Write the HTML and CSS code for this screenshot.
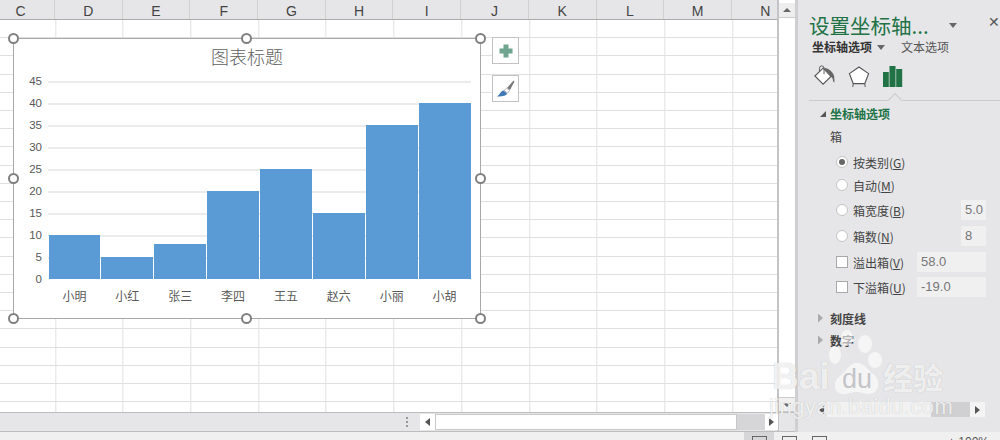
FILE: index.html
```html
<!DOCTYPE html>
<html lang="zh">
<head>
<meta charset="utf-8">
<title>设置坐标轴选项</title>
<link rel="stylesheet" href="styles.css">
</head>
<body>
<div class="app">
  <div class="main">
    <div class="sheet-col">
      <div class="col-head">
        <div class="col first">C</div><div class="col">D</div><div class="col">E</div><div class="col">F</div><div class="col">G</div><div class="col">H</div><div class="col">I</div><div class="col">J</div><div class="col">K</div><div class="col">L</div><div class="col">M</div><div class="col">N</div>
      </div>
      <div class="grid">
        <div class="chart">
          <div class="chart-title">图表标题</div>
          <div class="chart-body">
            <div class="y-axis"><span>45</span><span>40</span><span>35</span><span>30</span><span>25</span><span>20</span><span>15</span><span>10</span><span>5</span><span>0</span></div>
            <div class="plot">
              <div class="bar" style="height:22.22%"></div>
              <div class="bar" style="height:11.11%"></div>
              <div class="bar" style="height:17.78%"></div>
              <div class="bar" style="height:44.44%"></div>
              <div class="bar" style="height:55.56%"></div>
              <div class="bar" style="height:33.33%"></div>
              <div class="bar" style="height:77.78%"></div>
              <div class="bar" style="height:88.89%"></div>
            </div>
          </div>
          <div class="x-axis"><span>小明</span><span>小红</span><span>张三</span><span>李四</span><span>王五</span><span>赵六</span><span>小丽</span><span>小胡</span></div>
          <i class="handle h-tl"></i><i class="handle h-tc"></i><i class="handle h-tr"></i>
          <i class="handle h-ml"></i><i class="handle h-mr"></i>
          <i class="handle h-bl"></i><i class="handle h-bc"></i><i class="handle h-br"></i>
        </div>
        <div class="chart-tools">
          <div class="tool">
            <svg width="16" height="16" viewBox="0 0 16 16"><path d="M5.500 1.500h5v4h4v5h-4v4h-5v-4h-4v-5h4z" fill="#6fa58f"/></svg>
          </div>
          <div class="tool">
            <svg width="20" height="20" viewBox="0 0 20 20"><path d="M11 9 L17.500 1.500 L18.500 2.500 L14 11z" fill="#7a7a7a"/><path d="M10.500 9 L13.500 11.500 L11.500 14 L8 11.500z" fill="#fff" stroke="#888" stroke-width=".6"/><path d="M7.500 11.500 L11 14.500 C10.500 16.500 8 17.500 1 17.500 C3.500 16 4 14 5 13 C5.800 12.200 6.500 11.800 7.500 11.500z" fill="#3f78b5"/></svg>
          </div>
        </div>
      </div>
      <div class="hscroll">
        <span class="dots"></span>
        <div class="sb-btn"><i class="tri-left"></i></div>
        <div class="hthumb"></div>
        <div class="htrack"></div>
        <div class="sb-btn narrow"><i class="tri-right"></i></div>
      </div>
    </div>
    <div class="vscroll">
      <div class="v-btn"><i class="tri-up"></i></div>
      <div class="v-track"></div>
      <div class="v-btn down"><i class="tri-down"></i></div>
      <div class="v-corner"></div>
    </div>
    <aside class="panel">
      <div class="panel-title">
        <h1>设置坐标轴...</h1>
        <i class="caret title-caret"></i>
        <span class="close">✕</span>
      </div>
      <div class="panel-tabs">
        <b>坐标轴选项</b><i class="caret"></i><span>文本选项</span>
      </div>
      <div class="panel-icons">
        <svg class="ic-bucket" width="23" height="22" viewBox="0 0 24 24"><path d="M1.500 12 L10.500 3.500 L19 12.500 L10.500 21z" fill="#fff" stroke="#555" stroke-width="1.200"/><path d="M6.500 7.500 V3.500 A2.500 2.500 0 0 1 11.500 3.500 V10" fill="none" stroke="#555" stroke-width="1"/><path d="M11 3 C16 3.500 21 7 22.500 12 L23 19 C21.500 19 21 17 21 15 L19 12.500z" fill="#666"/></svg>
        <svg class="ic-pent" width="22" height="23" viewBox="0 0 22 24"><path d="M11 2 L21 9 L17 19.500 H5 L1 9z" fill="#fff" stroke="#555" stroke-width="1.200"/><path d="M5 19.500 L4.500 23 M17 19.500 L17.500 23" stroke="#555" stroke-width="1"/></svg>
        <svg class="ic-bars" width="20" height="22" viewBox="0 0 20 22"><path d="M0 7h5.800v15H0zM6.500 1h6v21h-6zM13.200 4h6v18h-6z" fill="#217346"/></svg>
      </div>
      <div class="section-head"><i class="tri-open"></i><b>坐标轴选项</b></div>
      <div class="sub-label">箱</div>
      <div class="opt r1"><i class="radio on"></i><span>按类别(<u>G</u>)</span></div>
      <div class="opt r2"><i class="radio"></i><span>自动(<u>M</u>)</span></div>
      <div class="opt r3"><i class="radio"></i><span>箱宽度(<u>B</u>)</span><em class="field small">5.0</em></div>
      <div class="opt r4"><i class="radio"></i><span>箱数(<u>N</u>)</span><em class="field small">8</em></div>
      <div class="opt r5"><i class="check"></i><span>溢出箱(<u>V</u>)</span><em class="field wide">58.0</em></div>
      <div class="opt r6"><i class="check"></i><span>下溢箱(<u>U</u>)</span><em class="field wide">-19.0</em></div>
      <div class="section-closed first-closed"><i class="tri-closed"></i><b>刻度线</b></div>
      <div class="section-closed"><i class="tri-closed"></i><b>数字</b></div>
      <div class="panel-scroll">
        <div class="ps-btn"><i class="tri-left"></i></div>
        <div class="ps-thumb"></div>
        <div class="ps-track"></div>
        <div class="ps-btn"><i class="tri-right"></i></div>
      </div>
    </aside>
  </div>
  <footer class="status">
    <div class="view active"></div>
    <div class="view"></div>
    <div class="view"></div>
    <span class="zoom">+ 100%</span>
  </footer>
  <div class="watermark">
    <span class="wm-bai">Bai</span>
    <svg class="wm-paw" width="66" height="66" viewBox="0 0 66 66"><g fill="#fff" fill-opacity=".6"><ellipse cx="12" cy="25" rx="6" ry="9"/><ellipse cx="24" cy="8" rx="6" ry="8"/><ellipse cx="42" cy="14" rx="7" ry="9"/><ellipse cx="52" cy="30" rx="7" ry="8"/><path d="M34 33C42 33 44 40 50 44C59 50 56 64 46 64C41 64 38 62 34 62C29 62 26 64 20 64C11 64 9 52 17 46C24 41 26 33 34 33z"/></g></svg>
    <span class="wm-du">du</span>
    <span class="wm-jy">经验</span>
    <span class="wm-url">jingyan.baidu.com</span>
  </div>
</div>
</body>
</html>
```
FILE: styles.css
```css
* { box-sizing: border-box; }
html, body { margin: 0; padding: 0; }
body {
  width: 1000px;
  height: 440px;
  overflow: hidden;
  background: #fff;
  font-family: "Noto Sans CJK SC", "Liberation Sans", sans-serif;
  color: #444;
}
i, em { font-style: normal; display: block; }
.app { position: relative; width: 1000px; height: 440px; display: flex; flex-direction: column; overflow: hidden; }
.main { display: flex; height: 432px; }

/* sheet */
.sheet-col { width: 779px; display: flex; flex-direction: column; border-right: 2px solid #c4c4c6; flex: none; }
.col-head { height: 20px; display: flex; flex: none; background: #e6e6e8; border-bottom: 1px solid #ababab; overflow: hidden; }
.col { flex: none; width: 67.7px; border-right: 1px solid #d0d0d0; text-align: center; font: 14px/23px "Liberation Sans", sans-serif; color: #444; }
.col.first { margin-left: -12.7px; }
.grid {
  position: relative;
  height: 392px;
  flex: none;
  background-color: #fff;
  background-image:
    repeating-linear-gradient(to bottom, transparent 0, transparent 17.2px, #e0e0e0 17.2px, #e0e0e0 18.2px),
    repeating-linear-gradient(to right, transparent 0, transparent 66.7px, #e0e0e0 66.7px, #e0e0e0 67.7px);
  background-position: 0 0, -11.7px 0;
}

/* chart */
.chart {
  position: absolute;
  left: 13px;
  top: 18px;
  width: 468px;
  height: 281px;
  background: #fff;
  border: 1px solid #a8a8a8;
  display: flex;
  flex-direction: column;
}
.chart-title { height: 35px; padding-top: 3px; text-align: center; font-size: 18px; line-height: 29px; color: #5f5f5f; font-weight: 300; flex: none; }
.chart-body { display: flex; height: 198px; margin-top: 7px; flex: none; }
.y-axis { width: 34px; display: flex; flex-direction: column; justify-content: space-between; margin: -7px 0 -7px 0; text-align: right; font: 11.500px/14px "Liberation Sans", sans-serif; color: #595959; padding-right: 6px; flex: none; }
.plot {
  flex: none;
  width: 423px;
  height: 198px;
  display: flex;
  align-items: flex-end;
  gap: 1px;
  padding-left: .5px;
  background-image: repeating-linear-gradient(to bottom, #ebebeb 0, #ebebeb 2px, transparent 2px, transparent 22px);
}
.bar { flex: 1; background: #5b9bd5; }
.x-axis { display: flex; margin-left: 34px; width: 423px; padding-top: 8px; }
.x-axis span { flex: 1; text-align: center; font-size: 12px; line-height: 18px; color: #595959; }
.handle { position: absolute; width: 11px; height: 11px; border-radius: 50%; background: #fff; border: 2px solid #808080; }
.h-tl { left: -6px; top: -6px; }
.h-tc { left: 227px; top: -6px; }
.h-tr { right: -6px; top: -6px; }
.h-ml { left: -6px; top: 134px; }
.h-mr { right: -6px; top: 134px; }
.h-bl { left: -6px; bottom: -6px; }
.h-bc { left: 227px; bottom: -6px; }
.h-br { right: -6px; bottom: -6px; }
.chart-tools { position: absolute; left: 492px; top: 17px; display: flex; flex-direction: column; gap: 11px; }
.tool { width: 27px; height: 27px; background: #fff; border: 1px solid #c2c2c2; display: flex; align-items: center; justify-content: center; }

/* sheet scrollbar */
.hscroll { height: 20px; flex: none; background: #e6e6e8; border-top: 1px solid #bdbdbd; border-bottom: 1px solid #bdbdbd; display: flex; align-items: center; padding-left: 420px; position: relative; }
.dots { position: absolute; left: 406px; top: 4px; width: 2px; height: 10px; background: repeating-linear-gradient(to bottom, #999 0, #999 2px, transparent 2px, transparent 4px); }
.sb-btn { width: 15px; height: 16px; background: #fff; display: flex; align-items: center; justify-content: center; flex: none; }
.sb-btn.narrow { width: 13px; }
.hthumb { width: 302px; height: 16px; background: #fff; border: 1px solid #c8c8c8; flex: none; }
.htrack { width: 28px; height: 16px; background: #d6d6d8; flex: none; }
.tri-left { width: 0; height: 0; border: 4px solid transparent; border-left: 0; border-right: 5px solid #555; }
.tri-right { width: 0; height: 0; border: 4px solid transparent; border-right: 0; border-left: 5px solid #555; }
.tri-up { width: 0; height: 0; border: 4px solid transparent; border-top: 0; border-bottom: 4px solid #666; }
.tri-down { width: 0; height: 0; border: 4px solid transparent; border-bottom: 0; border-top: 4px solid #666; }

/* vertical scrollbar */
.vscroll { width: 16px; background: #fff; display: flex; flex-direction: column; padding-top: 3px; height: 432px; flex: none; }
.v-btn { height: 15px; background: #eee; display: flex; align-items: center; justify-content: center; flex: none; border-bottom: 1px solid #ccc; }
.v-btn.down { border-top: 1px solid #ccc; background: #f0f0f0; }
.v-track { flex: 1; background: #fff; }
.v-corner { height: 20px; flex: none; background: #e6e6e8; border-top: 1px solid #bdbdbd; border-bottom: 1px solid #bdbdbd; }

/* panel */
.panel {
  width: 205px;
  height: 432px;
  background: #e6e6e8;
  border-left: 3px solid #cfcfd1;
  position: relative;
  flex: none;
  display: flex;
  flex-direction: column;
  padding-left: 11px;
}
.panel-title { display: flex; align-items: center; height: 28px; margin-top: 11px; flex: none; }
.panel-title h1 { margin: 0; font-size: 20.500px; font-weight: 400; color: #217346; line-height: 28px; width: 140px; white-space: nowrap; }
.caret { width: 0; height: 0; border: 4.500px solid transparent; border-bottom: 0; border-top: 5px solid #666; }
.close { position: absolute; left: 190px; top: 14px; font: bold 14px/16px "DejaVu Sans", sans-serif; color: #555; }
.title-caret { margin-left: 0; }
.panel-tabs { display: flex; align-items: center; height: 16px; margin-top: 0; padding-left: 3px; flex: none; font-size: 12px; line-height: 16px; }
.panel-tabs b { color: #333; font-weight: 700; }
.panel-tabs .caret { margin: 0 0 0 5px; }
.panel-tabs span { margin-left: 16px; color: #555; }
.panel-icons { position: relative; height: 46px; flex: none; border-bottom: 1px solid #cbcbcd; display: flex; align-items: flex-start; padding-top: 10px; padding-left: 4px; }
.panel-icons::after { content: ""; position: absolute; left: 81px; bottom: -5px; width: 9px; height: 9px; background: #e6e6e8; border-left: 1px solid #cbcbcd; border-top: 1px solid #cbcbcd; transform: rotate(45deg); }
.ic-pent { margin-left: 12px; }
.ic-bars { margin-left: 13px; margin-top: 0; }
.section-head { display: flex; align-items: center; height: 18px; margin-top: 3px; font-size: 12px; color: #217346; flex: none; padding-left: 11px; }
.section-head b { margin-left: 4px; font-weight: 700; }
.tri-open { width: 0; height: 0; border-bottom: 6px solid #555; border-left: 6px solid transparent; margin-top: 1px; }
.sub-label { font-size: 12px; line-height: 16px; margin-top: 7px; padding-left: 21px; color: #444; flex: none; }
.opt { display: flex; align-items: center; font-size: 12px; color: #444; position: relative; flex: none; height: 20px; padding-left: 27px; }
.opt u { text-decoration: underline; }
.opt span { margin-left: 5px; }
.r1 { margin-top: 7px; }
.r2 { margin-top: 3px; }
.r3 { margin-top: 5px; }
.r4 { margin-top: 6px; }
.r5 { margin-top: 6px; }
.r6 { margin-top: 5px; }
.radio { width: 12px; height: 12px; border-radius: 50%; background: #fff; border: 1px solid #c4c4c4; position: relative; flex: none; }
.radio.on::after { content: ""; position: absolute; left: 2px; top: 2px; width: 6px; height: 6px; border-radius: 50%; background: #666; }
.check { width: 12px; height: 12px; background: #fff; border: 1px solid #a8a8a8; flex: none; }
.field { position: absolute; top: 0; height: 20px; background: #f0f0f1; color: #777; font: 13px/20px "Liberation Sans", sans-serif; padding-left: 4px; }
.field.small { left: 152px; width: 25px; }
.field.wide { left: 108px; width: 69px; }
.section-closed { display: flex; align-items: center; height: 18px; font-size: 12px; color: #444; flex: none; padding-left: 9px; margin-top: 4px; }
.section-closed.first-closed { margin-top: 12px; }
.section-closed b { margin-left: 7px; font-weight: 700; }
.tri-closed { width: 5px; height: 9px; clip-path: polygon(0 0, 100% 50%, 0 100%); background: #aaa; }
.panel-scroll { position: absolute; left: 17px; top: 402px; width: 170px; height: 15px; display: flex; background: #d0d0d2; }
.ps-btn { width: 12px; display: flex; align-items: center; justify-content: center; flex: none; background: #e6e6e8; }
.ps-btn:last-child { width: 15px; background: #f4f4f4; }
.ps-thumb { width: 104px; background: #f2f2f2; flex: none; }
.ps-track { flex: 1; }

/* status bar */
.status { height: 8px; flex: none; background: #f0f0f1; display: flex; padding-left: 744px; position: relative; overflow: hidden; }
.view { width: 30px; height: 8px; position: relative; }
.view.active { background: #d6d6d8; }
.view::after { content: ""; position: absolute; left: 8px; top: 4px; width: 13px; height: 6px; border: 1px solid #666; }
.zoom { position: absolute; left: 948px; top: 3px; font: 12px/14px "Liberation Sans", sans-serif; color: #555; white-space: nowrap; }

/* watermark */
.watermark { position: absolute; inset: 0; pointer-events: none; color: rgba(255,255,255,.8); font-family: "Liberation Sans", sans-serif; text-shadow: 0 0 1px rgba(120,120,120,.45); }
.watermark span, .watermark svg { position: absolute; }
.wm-bai { left: 772px; top: 356px; font-size: 37px; line-height: 42px; font-weight: 700; }
.wm-paw { left: 823px; top: 330px; }
.wm-du { left: 842px; top: 364px; font-size: 27px; line-height: 30px; color: rgba(190,190,195,.9); text-shadow: none; }
.wm-jy { left: 883px; top: 360px; font-family: "Noto Sans CJK SC", sans-serif; font-size: 30px; line-height: 32px; font-weight: 700; }
.wm-url { left: 769px; top: 396px; font-size: 22px; line-height: 22px; letter-spacing: .4px; }
```
